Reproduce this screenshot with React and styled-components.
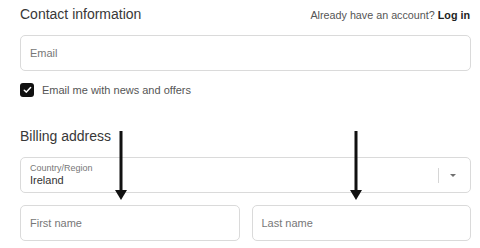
import React from "react";
import styled, { createGlobalStyle } from "styled-components";

const Global = createGlobalStyle`
  html, body { margin: 0; padding: 0; background: #fff; }
  body { font-family: "Liberation Sans", Arial, sans-serif; }
  * { box-sizing: border-box; }
`;

const Page = styled.div`
  position: relative;
  width: 480px;
  height: 248px;
  overflow: hidden;
  padding: 4px 9px 0 20px;
  display: flex;
  flex-direction: column;
`;

const HeaderRow = styled.div`
  display: flex;
  justify-content: space-between;
  align-items: baseline;
`;

const Heading = styled.h2`
  margin: 0;
  font-size: 14px;
  line-height: 20px;
  font-weight: 400;
  color: #383838;
`;

const LoginText = styled.div`
  font-size: 10.75px;
  color: #555;
  padding-right: 1px;
  b { color: #222; font-weight: 700; }
`;

const Field = styled.div`
  height: 36px;
  border: 1px solid #dadada;
  border-radius: 5px;
  display: flex;
  align-items: center;
  padding: 0 9px 0 9px;
  font-size: 11px;
  color: #777;
  flex: ${p => (p.$grow ? 1 : "none")};
  margin-top: ${p => p.$mt || 0}px;
`;

const CheckRow = styled.label`
  display: flex;
  align-items: center;
  gap: 8px;
  margin-top: 12px;
  height: 14px;
  font-size: 11px;
  color: #555;
`;

const Box = styled.span`
  width: 14px;
  height: 14px;
  border-radius: 3px;
  background: #111;
  display: flex;
  align-items: center;
  justify-content: center;
`;

const Section = styled.div`
  margin-top: ${p => p.$mt}px;
`;

const Select = styled.div`
  margin-top: 11px;
  height: 36px;
  border: 1px solid #dadada;
  border-radius: 5px;
  display: flex;
  align-items: center;
  padding: 0 14px 0 9px;
`;

const SelectText = styled.div`
  flex: 1;
  display: flex;
  flex-direction: column;
  align-self: flex-start;
  padding-top: 5px;
`;

const SmallLabel = styled.span`
  font-size: 9px;
  line-height: 11px;
  color: #777;
`;

const Value = styled.span`
  font-size: 11px;
  line-height: 13px;
  color: #333;
`;

const Divider = styled.span`
  width: 1px;
  height: 15px;
  background: #d6d6d6;
  margin-right: 11px;
`;

const Caret = styled.span`
  width: 0;
  height: 0;
  border-left: 3px solid transparent;
  border-right: 3px solid transparent;
  border-top: 3px solid #707070;
`;

const NameRow = styled.div`
  display: flex;
  gap: 12px;
  margin-top: 12px;
`;

const ArrowSvg = styled.svg`
  position: absolute;
  top: 131px;
  left: ${p => p.$x}px;
`;

function Arrow({ x }) {
  return (
    <ArrowSvg $x={x} width="12" height="70" viewBox="0 0 12 70">
      <rect x="4.5" y="0" width="3" height="61" fill="#111" />
      <polygon points="0,59 12,59 6,69" fill="#111" />
    </ArrowSvg>
  );
}

export default function App() {
  return (
    <>
      <Global />
      <Page>
        <HeaderRow>
          <Heading>Contact information</Heading>
          <LoginText>
            Already have an account? <b>Log in</b>
          </LoginText>
        </HeaderRow>
        <Field $mt={11}>Email</Field>
        <CheckRow>
          <Box>
            <svg width="9" height="8" viewBox="0 0 9 8">
              <path d="M1.3 4.2 L3.4 6.1 L7.6 1.6" fill="none" stroke="#fff" strokeWidth="1.5" strokeLinecap="round" strokeLinejoin="round" />
            </svg>
          </Box>
          Email me with news and offers
        </CheckRow>
        <Section $mt={29}>
          <Heading>Billing address</Heading>
          <Select>
            <SelectText>
              <SmallLabel>Country/Region</SmallLabel>
              <Value>Ireland</Value>
            </SelectText>
            <Divider />
            <Caret />
          </Select>
          <NameRow>
            <Field $grow>First name</Field>
            <Field $grow>Last name</Field>
          </NameRow>
        </Section>
        <Arrow x={115} />
        <Arrow x={350} />
      </Page>
    </>
  );
}
